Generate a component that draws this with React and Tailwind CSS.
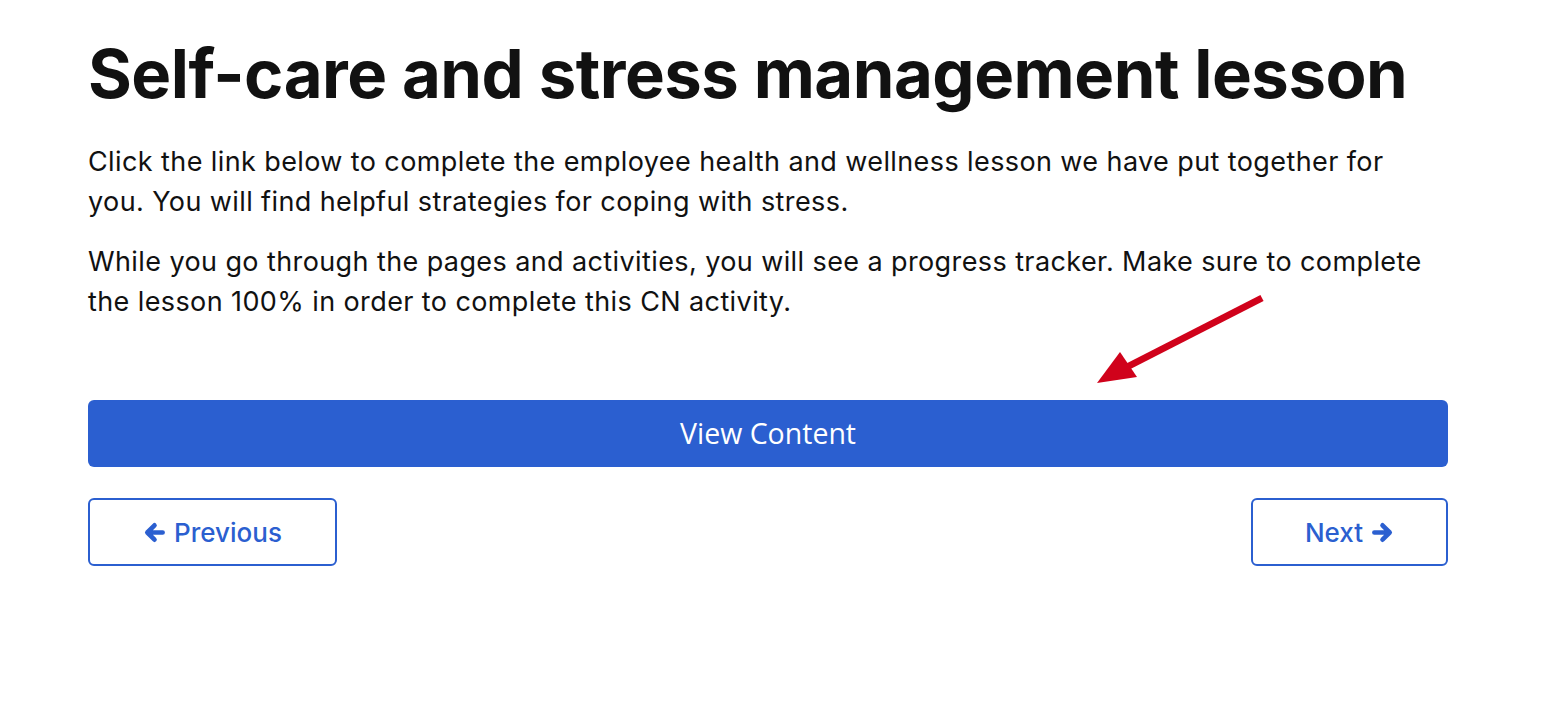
import React from 'react';

function Arrow({ dir }) {
  return (
    <svg viewBox="0 0 24 24" className={'w-[23px] h-[23px]' + (dir === 'right' ? ' rotate-180' : '')} fill="none" stroke="currentColor" strokeWidth="4.8" strokeLinecap="round" strokeLinejoin="round">
      <path d="M20.5 12H4.5M12 4.5L4.5 12L12 19.5" />
    </svg>
  );
}

export default function App() {
  return (
    <div className="relative min-h-[716px] w-full bg-white" style={{ fontFamily: 'Inter, "Liberation Sans", sans-serif' }}>
      <div className="px-[88px] pt-[34px] w-[1536px]">
        <h1 className="text-[67px] leading-[80px] font-bold tracking-[-0.5px] text-[#111]">
          Self-care and stress management lesson
        </h1>
        <div className="mt-[28px] text-[27px] leading-[40px] tracking-[0.4px] text-[#111] max-w-[1350px]">
          <p>
            Click the link below to complete the employee health and wellness lesson we have put together for you. You will find helpful strategies for coping with stress.
          </p>
          <p className="mt-[20px]">
            While you go through the pages and activities, you will see a progress tracker. Make sure to complete the lesson 100% in order to complete this CN activity.
          </p>
        </div>
        <div className="w-[1360px] mt-[78px]">
          <button
            className="w-full h-[67px] rounded-[6px] bg-[#2b5fd0] text-white text-[28.5px] font-medium"
            style={{ fontFamily: '"Open Sans", sans-serif' }}
          >
            View Content
          </button>
          <div className="mt-[31px] flex justify-between">
            <button className="w-[249px] h-[68px] rounded-[6px] border-2 border-[#2b5fd0] text-[#2b5fd0] text-[26px] font-medium flex items-center justify-center gap-[8px]">
              <Arrow dir="left" />
              <span>Previous</span>
            </button>
            <button className="w-[197px] h-[68px] rounded-[6px] border-2 border-[#2b5fd0] text-[#2b5fd0] text-[26px] font-medium flex items-center justify-center gap-[8px]">
              <span>Next</span>
              <Arrow dir="right" />
            </button>
          </div>
        </div>
      </div>
      <svg className="absolute left-0 top-0 pointer-events-none" width="1566" height="716">
        <line x1="1262" y1="298" x2="1125" y2="368" stroke="#d0021b" strokeWidth="7" />
        <polygon points="1097,383 1120,352 1137,377" fill="#d0021b" />
      </svg>
    </div>
  );
}
